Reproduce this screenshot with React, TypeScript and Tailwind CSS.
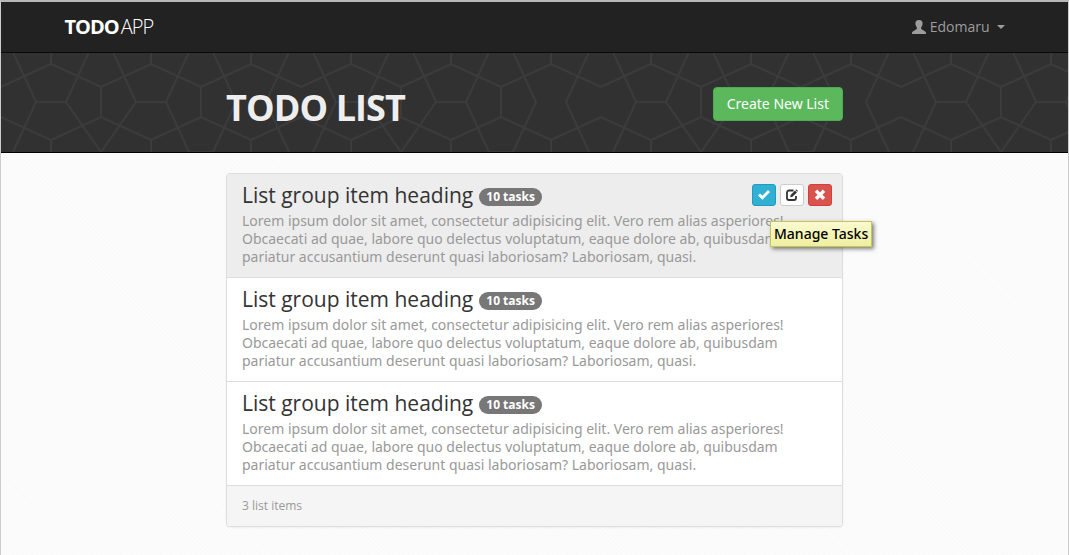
import React from "react";

const description =
  "Lorem ipsum dolor sit amet, consectetur adipisicing elit. Vero rem alias asperiores! Obcaecati ad quae, labore quo delectus voluptatum, eaque dolore ab, quibusdam pariatur accusantium deserunt quasi laboriosam? Laboriosam, quasi.";

const lists = [
  { id: 1, title: "List group item heading", tasks: 10, active: true },
  { id: 2, title: "List group item heading", tasks: 10, active: false },
  { id: 3, title: "List group item heading", tasks: 10, active: false },
];

function UserIcon() {
  return (
    <svg viewBox="0 0 14 14" className="h-[14px] w-[14px]" fill="currentColor" aria-hidden="true">
      <path d="M7 0C4.400 0 3.400 1.400 3.400 3.200c0 .9.100 1.500.4 2.200.2.5.3.8.6 1.200.3.500.5 1 .5 1.600 0 .7-.3 1.100-.9 1.400L1.600 10.900C.5 11.400 0 12 0 13v1h14v-1c0-1-.5-1.600-1.600-2.100L10 9.600c-.6-.3-.9-.7-.9-1.400 0-.6.2-1.100.5-1.600.3-.4.4-.7.6-1.200.3-.7.4-1.300.4-2.200C10.600 1.400 9.600 0 7 0Z" />
    </svg>
  );
}

function OkIcon() {
  return (
    <svg viewBox="0 0 12 12" className="h-3 w-3" fill="currentColor" aria-hidden="true">
      <path d="M0 6.500 2 4.500l2.400 2.200L10 1l2 2-7.600 7.800Z" />
    </svg>
  );
}

function EditIcon() {
  return (
    <svg viewBox="0 0 12 12" className="h-3 w-3" fill="none" stroke="currentColor" aria-hidden="true">
      <path d="M7.500 1.500H3A2 2 0 0 0 1 3.500V9a2 2 0 0 0 2 2h5a2 2 0 0 0 2-2V7" strokeWidth="1.800" />
      <path d="M4.200 8.200 4.600 5.900 9 1.500l1.900 1.900-4.400 4.400Z" fill="currentColor" stroke="none" />
      <path d="m9.500 1 .8-.8 1.700 1.700-.7.900Z" fill="currentColor" stroke="none" />
    </svg>
  );
}

function RemoveIcon() {
  return (
    <svg viewBox="0 0 12 12" className="h-3 w-3" fill="currentColor" aria-hidden="true">
      <path d="M3.200.6 6 3.400 8.800.6 11.200 3l-2.800 2.800 2.800 2.800L8.800 11 6 8.200 3.200 11 .8 8.600l2.800-2.800L.8 3Z" />
    </svg>
  );
}

function BannerPattern() {
  return (
    <svg className="absolute inset-0 h-full w-full" aria-hidden="true">
      <defs>
        <pattern id="pentagons" x="50" y="0" width="300" height="100" patternUnits="userSpaceOnUse">
          <g fill="none" stroke="#3b3b3b" strokeWidth="2">
            <path d="M0 -1V11L50 34L100 11L150 34L200 11L250 34L300 11V-1M100 -1V11M200 -1V11" />
            <path d="M0 101V87L50 64L100 87L150 64L200 87L250 64L300 87V101M100 101V87M200 101V87" />
            <path d="M50 34V64M150 34V64" />
            <path d="M-38 -1L-15 49H15L38 -1M62 -1L85 49H115L138 -1M162 -1L185 49L162 99M238 -1L215 49L238 99M262 -1L285 49H315" />
            <path d="M15 49L50 99L85 49M115 49L138 99H162M285 49L262 99M-15 49L-38 99" />
          </g>
        </pattern>
      </defs>
      <rect width="100%" height="100%" fill="url(#pentagons)" />
    </svg>
  );
}

export default function App() {
  return (
    <div className="min-h-screen border-x border-t-2 border-[#ccc] border-t-[#b8b8b8] bg-[#fbfbfb] bg-[repeating-linear-gradient(45deg,#fcfcfc_0px,#f9f9f9_2px,#fcfcfc_3px,#fafafa_5px,#fcfcfc_7px)] font-['Noto_Sans','Open_Sans',sans-serif] text-sm text-[#333]">
      <nav className="border-b border-[#080808] bg-[#222]">
        <div className="mx-auto flex h-[50px] max-w-[940px] items-center justify-between">
          <a href="#" className="font-['Open_Sans',sans-serif] text-xl tracking-tighter text-white">
            <strong className="font-bold">TODO</strong>
            <span className="ml-0.5 font-light">APP</span>
          </a>
          <button type="button" className="flex items-center gap-1 font-['Open_Sans',sans-serif] text-sm text-[#9d9d9d]">
            <UserIcon />
            <span>Edomaru</span>
            <span className="ml-[3px] border-x-4 border-t-4 border-x-transparent border-t-[#9d9d9d]" />
          </button>
        </div>
      </nav>

      <header className="relative border-b border-black bg-[#313131]">
        <BannerPattern />
        <div className="relative mx-auto flex h-[99px] max-w-[617px] items-center justify-between pt-[10px]">
          <h1 className="font-['Open_Sans',sans-serif] text-4xl font-bold tracking-tight text-[#eee]">TODO LIST</h1>
          <button type="button" className="mb-2 h-[34px] rounded border border-[#4cae4c] bg-[#5cb85c] px-[13px] text-sm text-white">
            Create New List
          </button>
        </div>
      </header>

      <main className="mx-auto max-w-[617px] py-5">
        <section className="rounded border border-[#ddd] bg-white shadow-xs">
          <ul>
            {lists.map((list) => (
              <li
                key={list.id}
                className={
                  list.active
                    ? "relative rounded-t-[3px] border-b border-[#ddd] bg-[#ededed] px-[15px] pt-1.5 pb-[11px]"
                    : "relative border-b border-[#ddd] bg-white px-[15px] pt-1.5 pb-[11px]"
                }
              >
                <div className="mb-0.5 flex items-center gap-1.5 font-['Open_Sans',sans-serif]">
                  <h2 className="text-[21px] leading-[30px] text-[#333]">{list.title}</h2>
                  <span className="mt-1 rounded-full bg-[#777] px-[7px] text-xs leading-[18px] font-bold text-white">
                    {list.tasks} tasks
                  </span>
                </div>
                <p className="text-sm leading-[18px] text-[#999]">{description}</p>
                {list.active && (
                  <div className="absolute top-[10px] right-[10px] flex gap-1">
                    <button type="button" aria-label="Manage Tasks" className="flex h-[22px] w-6 items-center justify-center rounded-[3px] border border-[#269abc] bg-[#31b0d5] text-white">
                      <OkIcon />
                    </button>
                    <button type="button" aria-label="Edit" className="flex h-[22px] w-6 items-center justify-center rounded-[3px] border border-[#ccc] bg-white text-[#333]">
                      <EditIcon />
                    </button>
                    <button type="button" aria-label="Delete" className="flex h-[22px] w-6 items-center justify-center rounded-[3px] border border-[#d43f3a] bg-[#d9534f] text-white">
                      <RemoveIcon />
                    </button>
                    <div role="tooltip" className="absolute top-[37px] left-[18px] z-10 border border-[#c5c55c] bg-linear-to-b from-[#fafad0] to-[#efef9e] px-[3px] text-sm leading-6 font-medium whitespace-nowrap text-black shadow-[2px_2px_4px_rgba(0,0,0,0.5)]">
                      Manage Tasks
                    </div>
                  </div>
                )}
              </li>
            ))}
          </ul>
          <footer className="rounded-b-[3px] bg-[#f5f5f5] px-[15px] py-[10px] font-['Open_Sans',sans-serif] text-xs leading-5 text-[#999]">3 list items</footer>
        </section>
      </main>
    </div>
  );
}
